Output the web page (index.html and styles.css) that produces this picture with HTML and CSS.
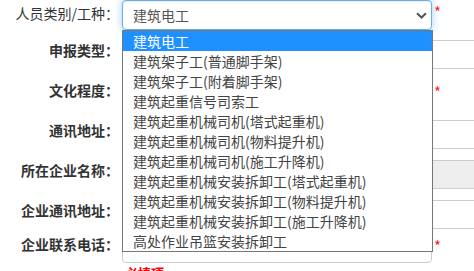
FILE: index.html
```html
<!DOCTYPE html>
<html lang="zh-CN">
<head>
<meta charset="utf-8">
<title>人员信息</title>
<link rel="stylesheet" href="styles.css">
</head>
<body>
<form class="form">
  <div class="row">
    <label class="lbl lbl-first">人员类别/工种：</label>
    <div class="field">
      <div class="select select-focus">
        <span class="select-text">建筑电工</span>
        <svg class="chev" width="11" height="7" viewBox="0 0 11 7"><path d="M1 1.2 L5.5 5.5 L10 1.2" fill="none" stroke="#555" stroke-width="2"/></svg>
      </div>
      <ul class="dropdown">
        <li class="opt opt-sel">建筑电工</li>
        <li class="opt">建筑架子工(普通脚手架)</li>
        <li class="opt">建筑架子工(附着脚手架)</li>
        <li class="opt">建筑起重信号司索工</li>
        <li class="opt">建筑起重机械司机(塔式起重机)</li>
        <li class="opt">建筑起重机械司机(物料提升机)</li>
        <li class="opt">建筑起重机械司机(施工升降机)</li>
        <li class="opt">建筑起重机械安装拆卸工(塔式起重机)</li>
        <li class="opt">建筑起重机械安装拆卸工(物料提升机)</li>
        <li class="opt">建筑起重机械安装拆卸工(施工升降机)</li>
        <li class="opt">高处作业吊篮安装拆卸工</li>
      </ul>
    </div>
    <span class="req">*</span>
  </div>
  <div class="row">
    <label class="lbl">申报类型：</label>
    <div class="field field-wide"><div class="input"></div></div>
  </div>
  <div class="row">
    <label class="lbl">文化程度：</label>
    <div class="field"><div class="input"></div></div>
    <span class="req">*</span>
  </div>
  <div class="row">
    <label class="lbl">通讯地址：</label>
    <div class="field field-wide"><div class="input"></div></div>
  </div>
  <div class="row">
    <label class="lbl">所在企业名称：</label>
    <div class="field field-wide"><div class="input input-disabled"></div></div>
  </div>
  <div class="row row-tight">
    <label class="lbl">企业通讯地址：</label>
    <div class="field field-wide"><div class="input"></div></div>
  </div>
  <div class="row row-last">
    <label class="lbl">企业联系电话：</label>
    <div class="field"><div class="input"></div></div>
    <span class="req">*</span>
  </div>
  <div class="hint">必填项</div>
</form>
</body>
</html>
```

FILE: styles.css
```css
html, body {
  margin: 0;
  padding: 0;
  background: #fff;
  overflow: hidden;
}
body {
  font-family: "Noto Sans CJK SC", "Noto Sans", sans-serif;
  font-size: 14px;
  color: #333;
}
.form {
  display: flex;
  flex-direction: column;
  width: 474px;
}
.row {
  display: flex;
  align-items: flex-start;
  height: 29px;
  margin-bottom: 11px;
}
.row-tight {
  margin-bottom: 5px;
}
.row-last {
  margin-bottom: 2px;
}
.lbl {
  flex: none;
  width: 119px;
  padding-right: 3px;
  text-align: right;
  font-weight: bold;
  line-height: 20px;
  color: #333;
  white-space: nowrap;
}
.lbl-first {
  font-weight: normal;
  padding-top: 3px;
}
.field {
  flex: none;
  width: 310px;
  height: 29px;
  position: relative;
}
.field-wide {
  width: 420px;
}
.input {
  box-sizing: border-box;
  height: 29px;
  border: 1px solid #ccc;
  border-radius: 4px;
  background: #fff;
}
.input-disabled {
  background: #eee;
}
.select {
  box-sizing: border-box;
  height: 30px;
  border: 1px solid #66afe9;
  border-radius: 4px;
  background: #fff;
  box-shadow: inset 0 1px 1px rgba(0,0,0,.075), 0 0 8px rgba(102,175,233,.6);
  display: flex;
  align-items: center;
  justify-content: space-between;
  padding: 0 4px 0 10px;
  color: #555;
}
.select-text {
  line-height: 20px;
}
.chev {
  margin-top: 1px;
}
.dropdown {
  position: absolute;
  top: 30px;
  left: 0;
  box-sizing: border-box;
  width: 311px;
  margin: 0;
  padding: 0;
  list-style: none;
  background: #fff;
  border: 1px solid #767676;
  z-index: 5;
}
.opt {
  height: 20px;
  line-height: 20px;
  padding-left: 10px;
  color: #444;
  white-space: nowrap;
}
.opt-sel {
  background: #1e90ff;
  color: #fff;
}
.req {
  flex: none;
  color: #f22;
  font-size: 15px;
  line-height: 20px;
  margin-left: 2px;
  margin-top: 2px;
}
.hint {
  padding-left: 125px;
  color: #f00;
  font-weight: bold;
  font-size: 13px;
  line-height: 16px;
}
```
